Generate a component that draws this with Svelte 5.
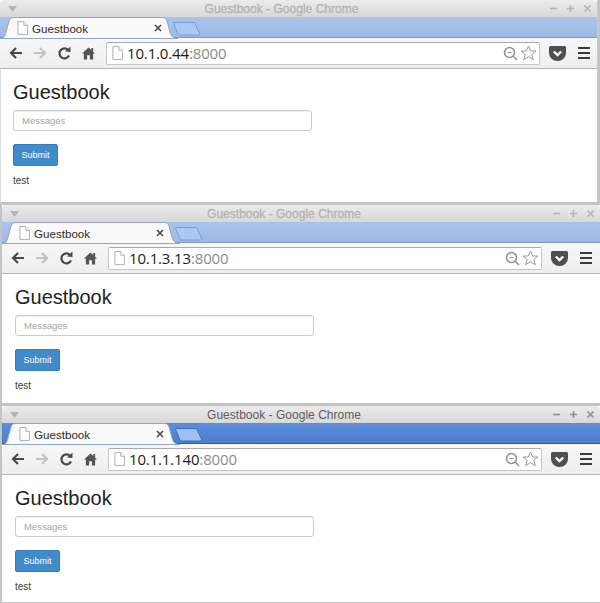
<script>
  const windows = [
    { host: '10.1.0.44', focused: false, side: 'first', contentHeight: 133 },
    { host: '10.1.3.13', focused: false, side: 'second', contentHeight: 129 },
    { host: '10.1.1.140', focused: true, side: 'third', contentHeight: 127 },
  ];
</script>

<div class="desktop">
  {#each windows as win (win.host)}
    <section class="window {win.side}" class:focused={win.focused}>
      <header class="titlebar">
        <svg class="menu-arrow" width="9" height="6" viewBox="0 0 9 6"><path d="M0 0h9L4.500 6z" /></svg>
        <span class="title">Guestbook - Google Chrome</span>
        <div class="controls">
          <svg width="9" height="9" viewBox="0 0 9 9"><path d="M1 4.500h7" /></svg>
          <svg width="9" height="9" viewBox="0 0 9 9"><path d="M1 4.500h7M4.500 1v7" /></svg>
          <svg width="9" height="9" viewBox="0 0 9 9"><path d="M1.500 1.500l6 6M7.500 1.500l-6 6" /></svg>
        </div>
      </header>

      <div class="tabstrip">
        <svg class="tab-shape" width="180" height="22" viewBox="0 0 180 22">
          <path class="tab-fill" d="M0 21.500C4 21.500 5 19 6 15L9 4C10 1.500 11 .5 14 .5H162C165 .5 166 1.500 167 4L170 15C171 19 173 21.500 178 21.500z" />
        </svg>
        <svg class="new-tab" width="28" height="15" viewBox="0 0 28 15">
          <path d="M1 1.500H20C21.500 1.500 22 2 22.500 3.500L26.500 12C27 13.500 26.500 14 25 14H7C5.500 14 5 13.500 4.500 12L.8 3C.4 2 .4 1.500 1 1.500z" />
        </svg>
        <div class="tab-content">
          <svg class="page-icon" width="11" height="14" viewBox="0 0 12 15">
            <path d="M1 .5H7.500L11.500 4.500V14.500H1z" />
            <path d="M7.500 .5V4.500H11.500" />
          </svg>
          <span class="tab-label">Guestbook</span>
          <svg class="tab-close" width="8" height="8" viewBox="0 0 8 8"><path d="M1 1l6 6M7 1L1 7" /></svg>
        </div>
      </div>

      <nav class="toolbar">
        <svg class="nav" width="16" height="14" viewBox="0 0 16 14"><path class="arrow" d="M14 7H3M8 2L3 7l5 5" /></svg>
        <svg class="nav fwd" width="16" height="14" viewBox="0 0 16 14"><path class="arrow" d="M2 7h11M8 2l5 5-5 5" /></svg>
        <svg class="nav reload" width="15" height="15" viewBox="0 0 15 15">
          <path class="arrow" d="M12 9.500A5 5 0 1 1 11 3.800" />
          <path class="solid" d="M8 5.500L13.500 6V.5z" />
        </svg>
        <svg class="nav home" width="13" height="14" viewBox="0 0 14 14">
          <path class="solid" d="M7 1L0 7.500h2V14h3.500V9.500h3V14H12V7.500h2L12 5.600V1.500H10V3.800z" />
        </svg>
        <div class="omnibox">
          <svg class="page-icon" width="11" height="14" viewBox="0 0 12 15">
            <path d="M1 .5H7.500L11.500 4.500V14.500H1z" />
            <path d="M7.500 .5V4.500H11.500" />
          </svg>
          <span class="url">{win.host}<span class="port">:8000</span></span>
          <svg class="zoom-icon" width="15" height="15" viewBox="0 0 15 15">
            <circle cx="6.500" cy="6.500" r="5" />
            <path d="M4.500 6.500h4" class="thin" />
            <path d="M10.300 10.300L14 14" />
          </svg>
          <svg class="star" width="17" height="16" viewBox="0 0 17 16">
            <path d="M8.500 1l2.200 5h5.300l-4.200 3.400 1.500 5.300-4.800-3-4.800 3 1.500-5.300L1 6h5.300z" />
          </svg>
        </div>
        <svg class="pocket" width="17" height="15" viewBox="0 0 17 15">
          <path class="pocket-body" d="M1.500 0h14A1.500 1.500 0 0 1 17 1.500V7a8.500 8 0 0 1-17 0V1.500A1.500 1.500 0 0 1 1.500 0z" />
          <path class="pocket-mark" d="M4.800 5.500l3.700 3.500 3.700-3.500" />
        </svg>
        <div class="hamburger"><i></i><i></i><i></i></div>
      </nav>

      <main class="content" style="height: {win.contentHeight}px">
        <h1>Guestbook</h1>
        <input type="text" placeholder="Messages" />
        <button type="button">Submit</button>
        <p>test</p>
      </main>
    </section>
  {/each}
</div>

<style>
  :global(body) {
    margin: 0;
    background: #c4c4c4;
  }

  .desktop {
    width: 600px;
    height: 603px;
    overflow: hidden;
    display: flex;
    flex-direction: column;
    font-family: "Liberation Sans", Arial, sans-serif;
  }

  .window {
    box-sizing: border-box;
    width: 598px;
    border-right: 1px solid #c9c9c9;
    background: #fff;
  }

  .first {
    margin-bottom: 3px;
  }

  .first .content {
    box-shadow: inset 1px 0 #dcdcdc;
  }

  .second,
  .third {
    margin-left: 2px;
    border-right: 0;
  }

  .third {
    margin-top: 3px;
  }

  .titlebar {
    height: 17px;
    display: flex;
    align-items: center;
    padding: 0 6px;
    background: linear-gradient(#ececec, #d8d8d8);
    border-radius: 4px 4px 0 0;
  }

  .menu-arrow {
    margin-left: 2px;
    fill: #b4b4b4;
  }

  .title {
    flex: 1;
    text-align: center;
    margin-right: 3px;
    font-size: 12px;
    -webkit-text-stroke: 0.3px #b4b4b4;
    letter-spacing: 0.02px;
    color: #b4b4b4;
  }

  .focused .title {
    color: #5c5c5c;
    -webkit-text-stroke: 0;
  }

  .controls {
    display: flex;
    gap: 8px;
    margin-right: -1px;
  }

  .controls svg {
    fill: none;
    stroke: #b4b4b4;
    stroke-width: 1.600;
  }

  .focused .controls svg {
    stroke: #8f8f8f;
  }

  .tabstrip {
    height: 21px;
    position: relative;
    background: linear-gradient(#a9c4ec, #9db9e3);
    box-shadow: inset 0 -1px 0 #7e99c4;
  }

  .focused .tabstrip {
    background: linear-gradient(#5d8ddd, #4d7ccd);
    box-shadow: inset 0 -1px 0 #2a5aa8;
  }

  .tab-shape {
    position: absolute;
    left: 0;
    top: 0;
  }

  .tab-fill {
    fill: #fafafa;
    stroke: #8ea6c8;
    stroke-width: 1;
  }

  .new-tab {
    position: absolute;
    left: 173px;
    top: 4px;
    fill: #a9c8f4;
    stroke: #7f9cc8;
    stroke-width: 1;
  }

  .focused .new-tab {
    fill: #9dbff2;
    stroke: #3f6cb8;
  }

  .tab-content {
    position: absolute;
    left: 17px;
    top: 3px;
    width: 145px;
    height: 16px;
    display: flex;
    align-items: center;
    gap: 4px;
  }

  .tab-label {
    flex: 1;
    font-size: 11.600px;
    color: #2b2b2b;
  }

  .tab-close {
    fill: none;
    stroke: #444;
    stroke-width: 1.500;
  }

  .page-icon {
    flex: none;
    fill: #fff;
    stroke: #a9a9a9;
    stroke-width: 1;
  }

  .toolbar {
    box-sizing: border-box;
    height: 31px;
    display: flex;
    align-items: center;
    padding: 0 9px 0 8px;
    background: linear-gradient(#f7f7f7, #eeeeee);
    border-bottom: 1px solid #b8b8b8;
  }

  .nav {
    flex: none;
    color: #4a4a4a;
  }

  .fwd {
    color: #c2c2c2;
    margin-left: 8px;
  }

  .reload {
    margin-left: 9px;
  }

  .home {
    margin-left: 10px;
    color: #555;
  }

  .arrow {
    fill: none;
    stroke: currentColor;
    stroke-width: 2.200;
  }

  .solid {
    fill: currentColor;
  }

  .omnibox {
    box-sizing: border-box;
    margin-left: 11px;
    width: 434px;
    height: 23px;
    flex: none;
    display: flex;
    align-items: center;
    padding: 0 2px 0 5px;
    background: #fff;
    border: 1px solid #c6c6c6;
    border-top-color: #aaa;
    border-radius: 2px;
  }

  .url {
    flex: 1;
    margin-left: 4px;
    font-size: 15px;
    font-family: "Open Sans", "Liberation Sans", sans-serif;
    color: #1c1c1c;
    letter-spacing: -0.15px;
  }

  .port {
    color: #8b8b8b;
  }

  .zoom-icon {
    flex: none;
    fill: none;
    stroke: #8f8f8f;
    stroke-width: 1.500;
  }

  .thin {
    stroke-width: 1;
  }

  .star {
    flex: none;
    margin-left: 2px;
    fill: #fff;
    stroke: #9a9a9a;
    stroke-width: 1;
  }

  .pocket {
    flex: none;
    margin-left: 9px;
  }

  .pocket-body {
    fill: #4f4f4f;
  }

  .pocket-mark {
    fill: none;
    stroke: #fff;
    stroke-width: 2.400;
  }

  .hamburger {
    flex: none;
    margin-left: 12px;
    width: 12px;
    display: flex;
    flex-direction: column;
    gap: 3px;
  }

  .hamburger i {
    display: block;
    height: 2px;
    background: #3a3a3a;
  }

  .content {
    box-sizing: border-box;
    padding: 11px 13px 0;
    background: #fff;
  }

  h1 {
    margin: 0;
    font-size: 20px;
    line-height: 24px;
    font-weight: 400;
    color: #222;
  }

  input {
    display: block;
    box-sizing: border-box;
    width: 299px;
    height: 21px;
    margin: 6px 0 13px;
    padding: 0 8px;
    font: 9.500px "Liberation Sans", Arial, sans-serif;
    background: #fff;
    border: 1px solid #ccc;
    border-radius: 3px;
    box-shadow: inset 0 1px 1px rgba(0, 0, 0, 0.075);
  }

  input::placeholder {
    color: #a4a4a4;
  }

  button {
    display: block;
    width: 45px;
    height: 22px;
    padding: 0;
    font: 9px "Liberation Sans", Arial, sans-serif;
    color: #fff;
    background: #428bca;
    border: 1px solid #357ebd;
    border-radius: 2px;
  }

  p {
    margin: 9px 0 0;
    font-size: 10px;
    line-height: 11px;
    color: #3c3c3c;
  }
</style>
